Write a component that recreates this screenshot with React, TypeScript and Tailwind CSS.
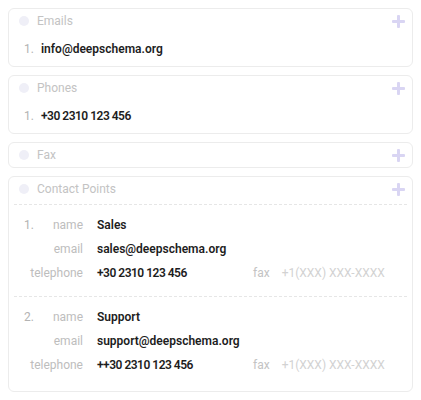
import React from "react";

const Plus = () => (
  <svg width="13" height="13" viewBox="0 0 13 13" className="shrink-0">
    <rect x="5" y="0" width="3" height="13" rx="1" fill="#d9d5f3" />
    <rect x="0" y="5" width="13" height="3" rx="1" fill="#d9d5f3" />
  </svg>
);

const Header = ({ label }: { label: string }) => (
  <div className="h-[24px] flex items-center pl-[10px] pr-[7px]">
    <div className="w-[10px] h-[10px] rounded-full bg-[#efeff7]" />
    <span className="ml-[8px] text-[12px] text-[#c3c3c3]">{label}</span>
    <div className="flex-1" />
    <Plus />
  </div>
);

const Card = ({ children }: { children: React.ReactNode }) => (
  <div className="border border-[#ececec] rounded-[6px] bg-white">{children}</div>
);

const SimpleItem = ({ value, phone }: { value: string; phone?: boolean }) => (
  <div className="pt-[6px] pb-[7px]">
    <div className="h-[20px] flex items-center pl-[15px]">
      <span className="w-[17px] text-[12px] text-[#b3b3b3]">1.</span>
      <span
        className={
          phone
            ? "text-[12px] font-semibold text-[#1d1d1d] tracking-[-0.5px]"
            : "text-[12px] font-semibold text-[#1d1d1d]"
        }
      >
        {value}
      </span>
    </div>
  </div>
);

const Row = ({
  num,
  label,
  value,
  fax,
}: {
  num?: string;
  label: string;
  value: string;
  fax?: boolean;
}) => (
  <div className="h-[24px] flex items-center pl-[15px]">
    <div className="w-[59px] flex items-center justify-between shrink-0">
      <span className="text-[12px] text-[#b3b3b3]">{num ?? ""}</span>
      <span className="text-[12px] text-[#bdbdbd]">{label}</span>
    </div>
    <span
      className={
        fax
          ? "ml-[14px] w-[156px] shrink-0 text-[12px] font-semibold text-[#1d1d1d] whitespace-nowrap tracking-[-0.5px]"
          : "ml-[14px] w-[156px] shrink-0 text-[12px] font-semibold text-[#1d1d1d] whitespace-nowrap"
      }
    >
      {value}
    </span>
    {fax && (
      <>
        <span className="text-[12px] text-[#c3c3c3]">fax</span>
        <span className="ml-[12px] text-[12px] text-[#d2d2d2] whitespace-nowrap">
          +1(XXX) XXX-XXXX
        </span>
      </>
    )}
  </div>
);

export default function App() {
  return (
    <div className="w-[421px] h-[400px] bg-white p-2 flex flex-col gap-2 font-[Roboto]">
      <Card>
        <Header label="Emails" />
        <SimpleItem value="info@deepschema.org" />
      </Card>
      <Card>
        <Header label="Phones" />
        <SimpleItem value="+30 2310 123 456" phone />
      </Card>
      <Card>
        <Header label="Fax" />
      </Card>
      <Card>
        <Header label="Contact Points" />
        <div className="mt-[3px] mx-[5px] border-t border-dashed border-[#e6e6e6]" />
        <div className="pt-[8px] pb-[11px]">
          <Row num="1." label="name" value="Sales" />
          <Row label="email" value="sales@deepschema.org" />
          <Row label="telephone" value="+30 2310 123 456" fax />
        </div>
        <div className="mx-[5px] border-t border-dashed border-[#e6e6e6]" />
        <div className="pt-[8px] pb-[14px]">
          <Row num="2." label="name" value="Support" />
          <Row label="email" value="support@deepschema.org" />
          <Row label="telephone" value="++30 2310 123 456" fax />
        </div>
      </Card>
    </div>
  );
}
